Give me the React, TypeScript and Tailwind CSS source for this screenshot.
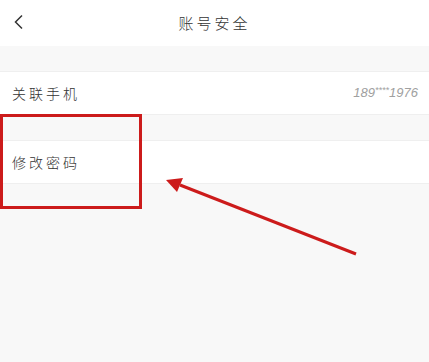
import React from 'react';

const font = { fontFamily: '"Noto Sans CJK SC", "Noto Sans", sans-serif' };

export default function App() {
  return (
    <div className="relative h-[362px] w-[429px] overflow-hidden bg-[#f8f8f8] text-[#333]" style={font}>
      {/* Header */}
      <div className="relative flex h-[46px] items-center justify-center bg-white">
        <svg className="absolute left-[13px] top-[14px]" width="12" height="16" viewBox="0 0 12 16">
          <path d="M9 1.5 L2.5 8 L9 14.5" fill="none" stroke="#333" strokeWidth="1.5" />
        </svg>
        <span className="text-[15px] font-light tracking-[3px]">账号安全</span>
      </div>

      <div className="h-[25px]" />

      {/* Rows */}
      <div className="flex h-[44px] items-center justify-between border-y border-[#efefef] bg-white pl-[12px] pr-[11px]">
        <span className="text-[14px] font-light tracking-[3px]">关联手机</span>
        <span className="text-[13px] font-light italic text-[#a0a0a0]" style={{ fontFamily: '"Liberation Sans", sans-serif' }}>
          189<sup className="text-[9px]">****</sup>1976
        </span>
      </div>

      <div className="h-[25px]" />

      <div className="flex h-[44px] items-center border-y border-[#efefef] bg-white pl-[12px]">
        <span className="text-[14px] font-light tracking-[3px]">修改密码</span>
      </div>

      {/* Annotation overlay */}
      <div className="absolute left-0 top-[114px] h-[95px] w-[142px] border-[3px] border-[#cc1b1b]" />
      <svg className="absolute left-0 top-0" width="429" height="362" viewBox="0 0 429 362">
        <line x1="356" y1="254" x2="180" y2="185" stroke="#cc1b1b" strokeWidth="3" />
        <polygon points="166,180 183,178 177,192" fill="#cc1b1b" />
      </svg>
    </div>
  );
}
